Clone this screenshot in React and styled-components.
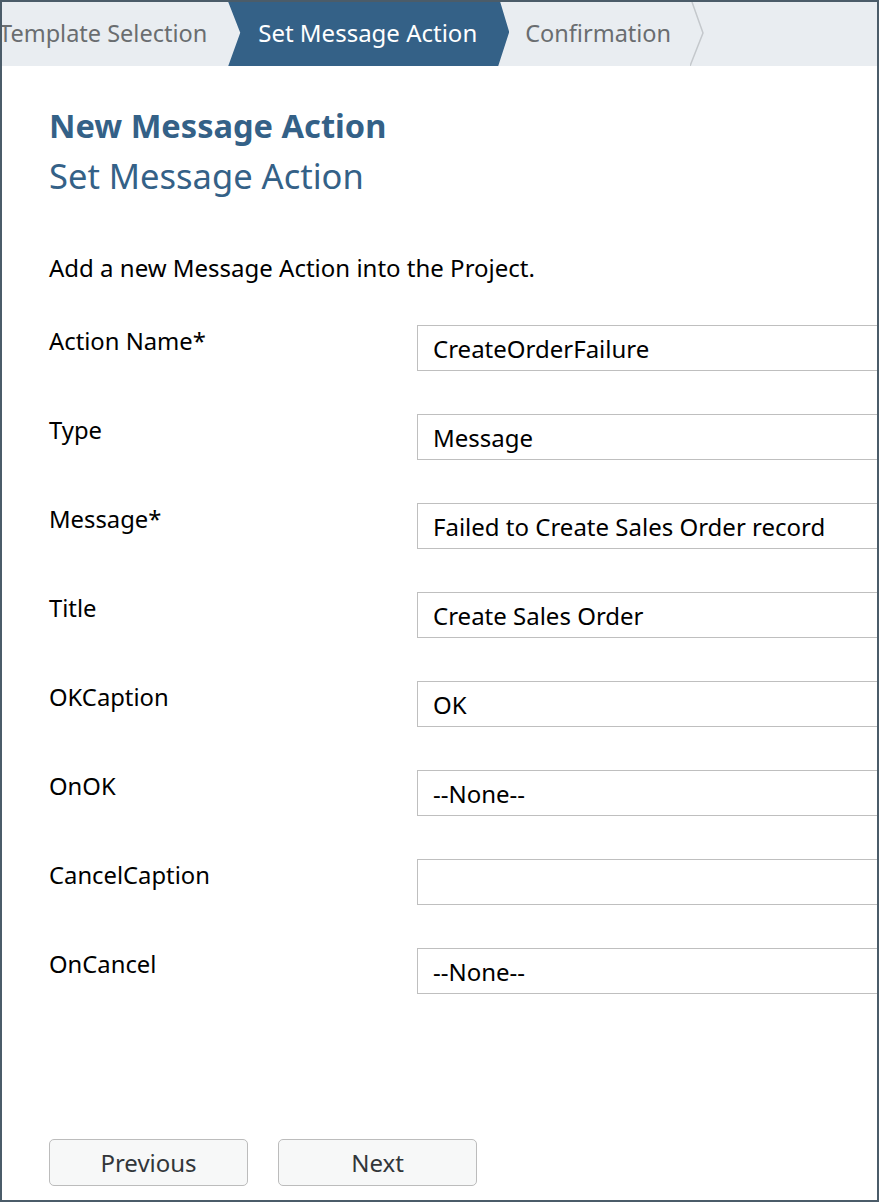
import React from "react";
import styled, { createGlobalStyle } from "styled-components";

const GlobalStyle = createGlobalStyle`
  html, body {
    margin: 0;
    padding: 0;
    background: #ffffff;
  }
  * {
    box-sizing: border-box;
  }
`;

const Frame = styled.div`
  width: 879px;
  height: 1202px;
  border: 2px solid #4b5c69;
  background: #ffffff;
  overflow: hidden;
  display: flex;
  flex-direction: column;
  font-family: "Noto Sans", "Open Sans", sans-serif;
  color: #000000;
`;

const Steps = styled.nav`
  height: 64px;
  flex: none;
  background: #e9edf1;
  display: flex;
  align-items: stretch;
  overflow: hidden;
`;

const Track = styled.div`
  display: flex;
  align-items: stretch;
  margin-left: -3px;
`;

const Step = styled.div`
  position: relative;
  display: flex;
  align-items: center;
  font-size: ${(p) => (p.$active ? "24px" : "23.5px")};
  white-space: nowrap;
  padding: ${(p) => p.$pad};
  padding-bottom: 3px;
  color: ${(p) => (p.$active ? "#ffffff" : "#6a6d70")};
  background: ${(p) => (p.$active ? "#346187" : "transparent")};
  clip-path: ${(p) =>
    p.$active
      ? "polygon(0 0, calc(100% - 9px) 0, 100% 47%, calc(100% - 11px) 100%, 0 100%, 12px 48%)"
      : "none"};
`;

const Chevron = styled.svg`
  position: absolute;
  right: 0;
  top: 0;
  width: 14px;
  height: 64px;
`;

const Body = styled.main`
  flex: 1;
  display: flex;
  flex-direction: column;
  padding: 40px 0 14px 47px;
`;

const Title = styled.h1`
  margin: 0;
  font-size: 32.6px;
  line-height: 40px;
  font-weight: 700;
  color: #346187;
`;

const Subtitle = styled.h2`
  margin: 10px 0 0;
  font-size: 34.5px;
  line-height: 40px;
  font-weight: 400;
  color: #346187;
`;

const Intro = styled.p`
  margin: 58px 0 43px;
  font-size: 24px;
  line-height: 28px;
`;

const Form = styled.div`
  display: grid;
  grid-template-columns: 368px 1fr;
  row-gap: 43px;
  margin-right: -20px;
`;

const Label = styled.label`
  font-size: 23.8px;
  line-height: 28px;
  padding-top: 2px;
`;

const Field = styled.div`
  height: 46px;
  border: 1px solid #bfbfbf;
  background: #ffffff;
  display: flex;
  align-items: center;
  padding: 0 15px;
  font-size: 24px;
  color: #000000;
`;

const Footer = styled.div`
  margin-top: auto;
  display: flex;
  gap: 30px;
`;

const Button = styled.button`
  width: 199px;
  height: 47px;
  border: 1px solid #bcbcbc;
  border-radius: 5px;
  background: #f7f8f8;
  color: #32363a;
  font-family: inherit;
  font-size: 24px;
  cursor: pointer;
`;

const fields = [
  ["Action Name*", "CreateOrderFailure"],
  ["Type", "Message"],
  ["Message*", "Failed to Create Sales Order record"],
  ["Title", "Create Sales Order"],
  ["OKCaption", "OK"],
  ["OnOK", "--None--"],
  ["CancelCaption", ""],
  ["OnCancel", "--None--"],
];

export default function App() {
  return (
    <>
      <GlobalStyle />
      <Frame>
        <Steps>
          <Track>
            <Step $pad="0 21px 0 0">Template Selection</Step>
            <Step $active $pad="0 32px 0 30px">Set Message Action</Step>
            <Step $pad="0 33px 0 16px">
              Confirmation
              <Chevron viewBox="0 0 14 64">
                <polyline
                  points="2,0 13,31 0,64"
                  fill="none"
                  stroke="#c4c8cc"
                  strokeWidth="1.5"
                />
              </Chevron>
            </Step>
          </Track>
        </Steps>
        <Body>
          <Title>New Message Action</Title>
          <Subtitle>Set Message Action</Subtitle>
          <Intro>Add a new Message Action into the Project.</Intro>
          <Form>
            {fields.map(([label, value]) => (
              <React.Fragment key={label}>
                <Label>{label}</Label>
                <Field>{value}</Field>
              </React.Fragment>
            ))}
          </Form>
          <Footer>
            <Button>Previous</Button>
            <Button>Next</Button>
          </Footer>
        </Body>
      </Frame>
    </>
  );
}
